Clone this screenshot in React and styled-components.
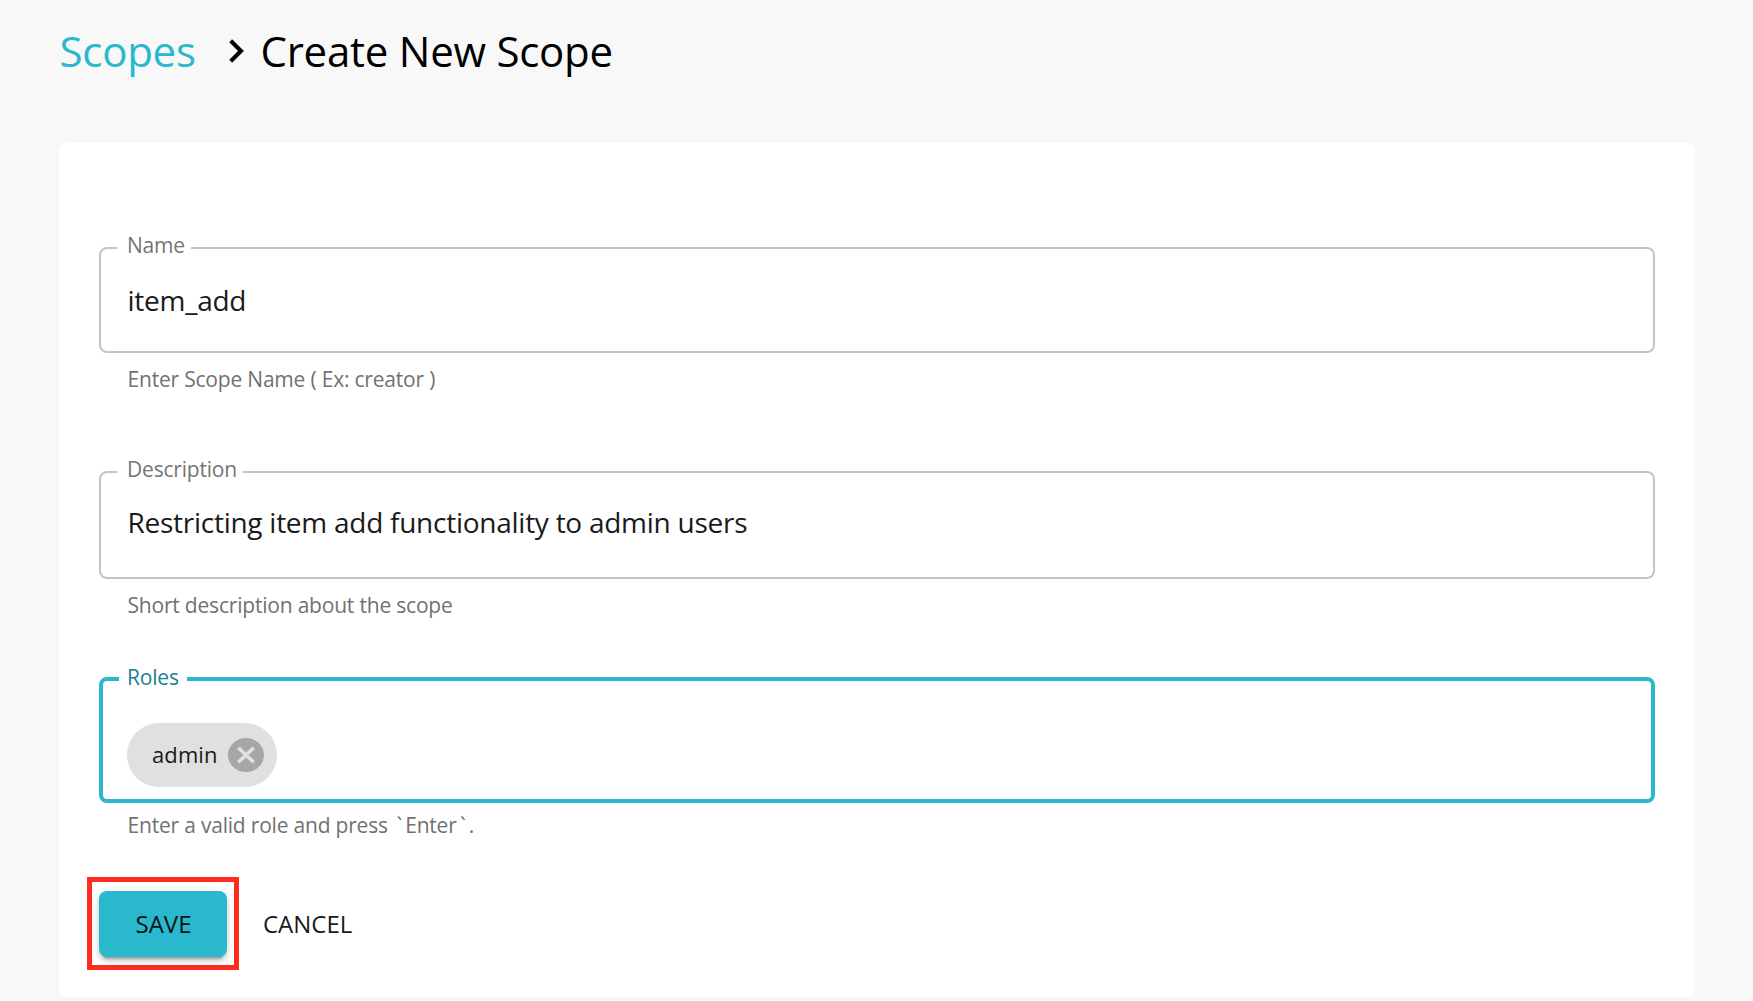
import React from "react";
import styled, { createGlobalStyle } from "styled-components";

const GlobalStyle = createGlobalStyle`
  *, *::before, *::after { box-sizing: border-box; }
  html, body { margin: 0; padding: 0; background: #f8f8f8; }
  body {
    font-family: "Open Sans", "Noto Sans", sans-serif;
    overflow: hidden;
  }
`;

const Page = styled.main`
  display: flex;
  flex-direction: column;
  height: 1001px;
  padding: 21px 58px 4px 59px;
  background: #f8f8f8;
`;

const Breadcrumb = styled.nav`
  display: flex;
  align-items: center;
  height: 60px;
  margin-bottom: 62px;
  font-size: 42px;
  line-height: 60px;
  letter-spacing: -0.25px;
  white-space: nowrap;
`;

const CrumbLink = styled.a`
  width: 154px;
  padding-left: 0.5px;
  color: #29b8ce;
`;

const CrumbIcon = styled.svg`
  width: 46px;
  height: 46px;
  margin-right: 1.5px;
  fill: #000;
  stroke: #000;
  stroke-width: 0.2;
  stroke-linejoin: round;
`;

const CrumbTitle = styled.h1`
  margin: 0;
  font: inherit;
  color: #000;
`;

const Card = styled.form`
  display: flex;
  flex-direction: column;
  flex: 1;
  padding: 104px 40px 0;
  border-radius: 8px;
  background: #fff;
`;

const Field = styled.div`
  display: flex;
  flex-direction: column;
  height: ${(p) => p.$height}px;
`;

const Outline = styled.fieldset`
  display: block;
  min-width: 0;
  height: ${(p) => p.$height}px;
  margin: 0;
  padding: 0 16px;
  border: ${(p) => (p.$active ? "4px solid #29b8ce" : "2px solid #c4c4c4")};
  border-radius: 8px;
`;

const Legend = styled.legend`
  width: ${(p) => p.$width}px;
  height: ${(p) => (p.$active ? 4 : 2)}px;
  padding: 0 0 0 ${(p) => (p.$active ? 8 : 10)}px;
  color: ${(p) => (p.$active ? "#1c8090" : "#757575")};
  font-size: 21px;
  line-height: ${(p) => (p.$active ? 4 : 2)}px;
  letter-spacing: -0.2px;
  white-space: nowrap;
`;

const LegendText = styled.span`
  display: block;
  transform: translateY(${(p) => p.$shift}px);
`;

const Value = styled.div`
  padding: ${(p) => p.$top}px 0 0 10.5px;
  color: #1a1a1a;
  font-size: 28px;
  line-height: 40px;
  letter-spacing: -0.26px;
  white-space: nowrap;
`;

const Helper = styled.p`
  margin: ${(p) => p.$gap}px 0 0 28.5px;
  color: #717171;
  font-size: 21px;
  line-height: 30px;
  letter-spacing: -0.2px;
  white-space: nowrap;
`;

const Tick = styled.span`
  padding: 0 3px 0 3.5px;
`;

const Chip = styled.div`
  display: flex;
  align-items: center;
  width: 150px;
  height: 64px;
  margin: 42px 0 0 8px;
  padding: 0 13px 0 25px;
  border-radius: 32px;
  background: #e0e0e0;
  color: #1a1a1a;
  font-size: 22px;
  line-height: 32px;
`;

const ChipLabel = styled.span`
  flex: 1;
  padding-bottom: 2px;
  letter-spacing: 0.1px;
`;

const ChipDelete = styled.svg`
  width: 36px;
  height: 34px;
`;

const Actions = styled.div`
  display: flex;
  align-items: center;
  height: 93px;
  margin-left: -12px;
`;

const Highlight = styled.div`
  display: flex;
  width: 152px;
  height: 93px;
  padding: 9px 7px 8px;
  border: 5px solid #ff2b1f;
`;

const Button = styled.button`
  height: 66px;
  padding: 0;
  border: 0;
  border-radius: 8px;
  font-family: inherit;
  font-size: 24px;
  line-height: 34px;
  text-transform: uppercase;
`;

const PrimaryButton = styled(Button)`
  width: 128px;
  padding-left: 1px;
  background: #29b8ce;
  color: #0a1214;
  box-shadow: 0 6px 2px -4px rgba(0, 0, 0, 0.2),
    0 4px 4px 0 rgba(0, 0, 0, 0.14), 0 2px 10px 0 rgba(0, 0, 0, 0.12);
`;

const TextButton = styled(Button)`
  margin-left: 24px;
  background: transparent;
  color: #1a1a1a;
`;

function OutlinedField({ label, notch, height, total, shift, active, helper, helperGap, children }) {
  return (
    <Field $height={total}>
      <Outline $height={height} $active={active}>
        <Legend $width={notch} $active={active}>
          <LegendText $shift={shift}>{label}</LegendText>
        </Legend>
        {children}
      </Outline>
      <Helper $gap={helperGap}>{helper}</Helper>
    </Field>
  );
}

export default function App() {
  return (
    <>
      <GlobalStyle />
      <Page>
        <Breadcrumb>
          <CrumbLink>Scopes</CrumbLink>
          <CrumbIcon viewBox="0 0 24 24">
            <path d="M10 6L8.59 7.41 13.17 12l-4.58 4.59L10 18l6-6z" />
          </CrumbIcon>
          <CrumbTitle>Create New Scope</CrumbTitle>
        </Breadcrumb>
        <Card onSubmit={(e) => e.preventDefault()}>
          <OutlinedField
            label="Name"
            notch={74}
            height={106}
            total={224}
            shift={-3}
            helper="Enter Scope Name ( Ex: creator )"
            helperGap={11}
          >
            <Value $top={31}>item_add</Value>
          </OutlinedField>
          <OutlinedField
            label="Description"
            notch={126}
            height={108}
            total={206}
            shift={-3}
            helper="Short description about the scope"
            helperGap={11}
          >
            <Value $top={29}>Restricting item add functionality to admin users</Value>
          </OutlinedField>
          <OutlinedField
            label="Roles"
            notch={68}
            height={126}
            total={200}
            shift={-2}
            active
            helper={
              <>
                Enter a valid role and press <Tick>`</Tick>Enter<Tick>`</Tick>.
              </>
            }
            helperGap={7}
          >
            <Chip>
              <ChipLabel>admin</ChipLabel>
              <ChipDelete viewBox="2 2 20 20" preserveAspectRatio="none">
                <path
                  fill="#a6a6a6"
                  d="M12 2C6.47 2 2 6.47 2 12s4.47 10 10 10 10-4.47 10-10S17.53 2 12 2zm5 13.59L15.59 17 12 13.41 8.41 17 7 15.59 10.59 12 7 8.41 8.41 7 12 10.59 15.59 7 17 8.41 13.41 12 17 15.59z"
                />
              </ChipDelete>
            </Chip>
          </OutlinedField>
          <Actions>
            <Highlight>
              <PrimaryButton type="submit">Save</PrimaryButton>
            </Highlight>
            <TextButton type="button">Cancel</TextButton>
          </Actions>
        </Card>
      </Page>
    </>
  );
}
